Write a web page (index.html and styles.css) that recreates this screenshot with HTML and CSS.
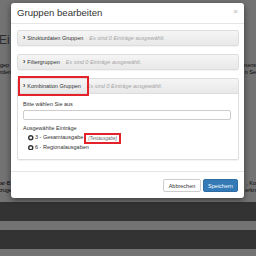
FILE: index.html
```html
<!DOCTYPE html>
<html lang="de">
<head>
<meta charset="utf-8">
<title>Gruppen bearbeiten</title>
<link rel="stylesheet" href="styles.css">
</head>
<body>
<div class="page">
  <h1 class="page-title">Ei</h1>
  <div class="text-row"><span>gep</span><span>mens</span></div>
  <div class="text-row"><span>rden</span><span>n Se</span></div>
  <div class="spacer"></div>
  <div class="text-row"><span>ar-B</span><span>, Ko</span></div>
  <div class="text-row"><span>zuge</span><span>erkn</span></div>
  <div class="bar bar-first"></div>
  <div class="bar bar-second"></div>
</div>

<div class="backdrop"></div>

<div class="modal">
  <div class="modal-header">
    <h4 class="modal-title">Gruppen bearbeiten</h4>
    <span class="close">&times;</span>
  </div>
  <div class="modal-body">
    <div class="panel">
      <div class="panel-heading">
        <span class="chev">&#8250;</span><span class="ptitle">Strukturdaten Gruppen</span><span class="pinfo">Es sind 0 Einträge ausgewählt.</span>
      </div>
    </div>
    <div class="panel">
      <div class="panel-heading">
        <span class="chev">&#8250;</span><span class="ptitle">Filtergruppen</span><span class="pinfo">Es sind 0 Einträge ausgewählt.</span>
      </div>
    </div>
    <div class="panel panel-open">
      <div class="panel-heading">
        <span class="chev">&#8250;</span><span class="ptitle">Kombination Gruppen</span><span class="pinfo">Es sind 0 Einträge ausgewählt.</span>
        <span class="mark"></span>
      </div>
      <div class="panel-body">
        <div class="label">Bitte wählen Sie aus</div>
        <div class="input"></div>
        <div class="label label-sel">Ausgewählte Einträge</div>
        <ul class="items">
          <li><svg class="icon" viewBox="0 0 10 10"><circle cx="5" cy="5" r="5" fill="#333"/><circle cx="5" cy="5" r="2.4" fill="#fff"/></svg>3 - Gesamtausgabe <span class="note">(Testausgabe)</span></li>
          <li><svg class="icon" viewBox="0 0 10 10"><circle cx="5" cy="5" r="5" fill="#333"/><circle cx="5" cy="5" r="2.4" fill="#fff"/></svg>6 - Regionalausgaben</li>
        </ul>
      </div>
    </div>
  </div>
  <div class="modal-footer">
    <button class="btn btn-default">Abbrechen</button>
    <button class="btn btn-primary">Speichern</button>
  </div>
</div>
</body>
</html>
```
FILE: styles.css
```css
* { box-sizing: border-box; }
html, body { margin: 0; padding: 0; }
body {
  width: 256px;
  height: 256px;
  overflow: hidden;
  position: relative;
  font-family: "Liberation Sans", Arial, sans-serif;
  color: #333;
  background: #fff;
}
.page {
  display: flex;
  flex-direction: column;
  padding-top: 32px;
}
.page-title {
  margin: 0 0 0 -1px;
  font-size: 12px;
  font-weight: normal;
  color: #666;
  line-height: 16px;
  white-space: nowrap;
}
.text-row {
  display: flex;
  justify-content: space-between;
  font-size: 5.5px;
  line-height: 7px;
  white-space: nowrap;
  color: #111;
}
.page-title + .text-row { margin-top: 14px; }
.spacer { height: 104px; }
.bar { background: #717171; height: 19px; }
.bar-first { margin-top: 8px; }
.bar-second { margin-top: 9px; }

.backdrop {
  position: absolute;
  inset: 0;
  background: rgba(0, 0, 0, 0.55);
}

.modal {
  position: absolute;
  left: 11px;
  top: 3px;
  width: 233px;
  height: 195px;
  background: #fff;
  border-radius: 3px;
  box-shadow: 0 2px 6px rgba(0, 0, 0, 0.5);
  display: flex;
  flex-direction: column;
}
.modal-header {
  height: 22px;
  padding: 0 6px;
  display: flex;
  align-items: center;
  justify-content: space-between;
  border-bottom: 1px solid #e5e5e5;
}
.modal-title {
  margin: 0;
  font-size: 9.6px;
  font-weight: normal;
  line-height: 12px;
  color: #333;
}
.close {
  font-size: 8px;
  font-weight: bold;
  color: #c8c8c8;
  line-height: 8px;
  margin-top: -2px;
}
.modal-body {
  padding: 6px 5px 11px 6px;
  display: flex;
  flex-direction: column;
  gap: 8px;
}
.panel {
  border: 1px solid #ddd;
  border-radius: 2px;
  box-shadow: 0 1px 1px rgba(0,0,0,0.05);
}
.panel-heading {
  position: relative;
  height: 14px;
  display: flex;
  align-items: center;
  padding: 0 5px;
  background: linear-gradient(#f5f5f5, #e8e8e8);
  font-size: 5.5px;
  white-space: nowrap;
}
.panel-open .panel-heading { border-bottom: 1px solid #ddd; height: 15px; }
.chev {
  font-size: 7px;
  font-weight: bold;
  margin-right: 2px;
  line-height: 7px;
  margin-top: -1px;
}
.ptitle { color: #333; }
.pinfo {
  font-style: italic;
  color: #a5a5a5;
  margin-left: 6px;
}
.mark {
  position: absolute;
  left: 0;
  top: -3px;
  width: 71px;
  height: 20px;
  border: 2px solid #e3222b;
}
.panel-body {
  padding: 7px 7px 8px 5px;
  font-size: 5.5px;
}
.label { line-height: 7px; }
.input {
  margin-top: 2px;
  height: 10px;
  border: 1px solid #ccc;
  border-radius: 2px;
}
.label-sel { margin-top: 5px; }
.items {
  list-style: none;
  margin: 1px 0 0;
  padding: 0 0 0 5px;
}
.items li {
  display: flex;
  align-items: center;
  line-height: 7.5px;
  white-space: nowrap;
}
.icon {
  width: 5.5px;
  height: 5.5px;
  margin-right: 1.5px;
}
.note {
  display: inline-block;
  font-size: 4.5px;
  font-style: italic;
  color: #666;
  border: 2px solid #e3222b;
  padding: 1px 2px;
  margin-left: 1px;
  line-height: 5px;
}
.modal-footer {
  margin-top: auto;
  border-top: 1px solid #e5e5e5;
  padding: 7px 6px 6px;
  display: flex;
  justify-content: flex-end;
  gap: 2px;
}
.btn {
  height: 13px;
  padding: 0 4px;
  font-family: "Liberation Sans", Arial, sans-serif;
  font-size: 5.5px;
  border-radius: 2px;
  border: 1px solid #ccc;
  background: #fff;
  color: #333;
}
.btn-default { width: 38px; }
.btn-primary {
  width: 35px;
  background: #337ab7;
  border-color: #2e6da4;
  color: #fff;
}
```
